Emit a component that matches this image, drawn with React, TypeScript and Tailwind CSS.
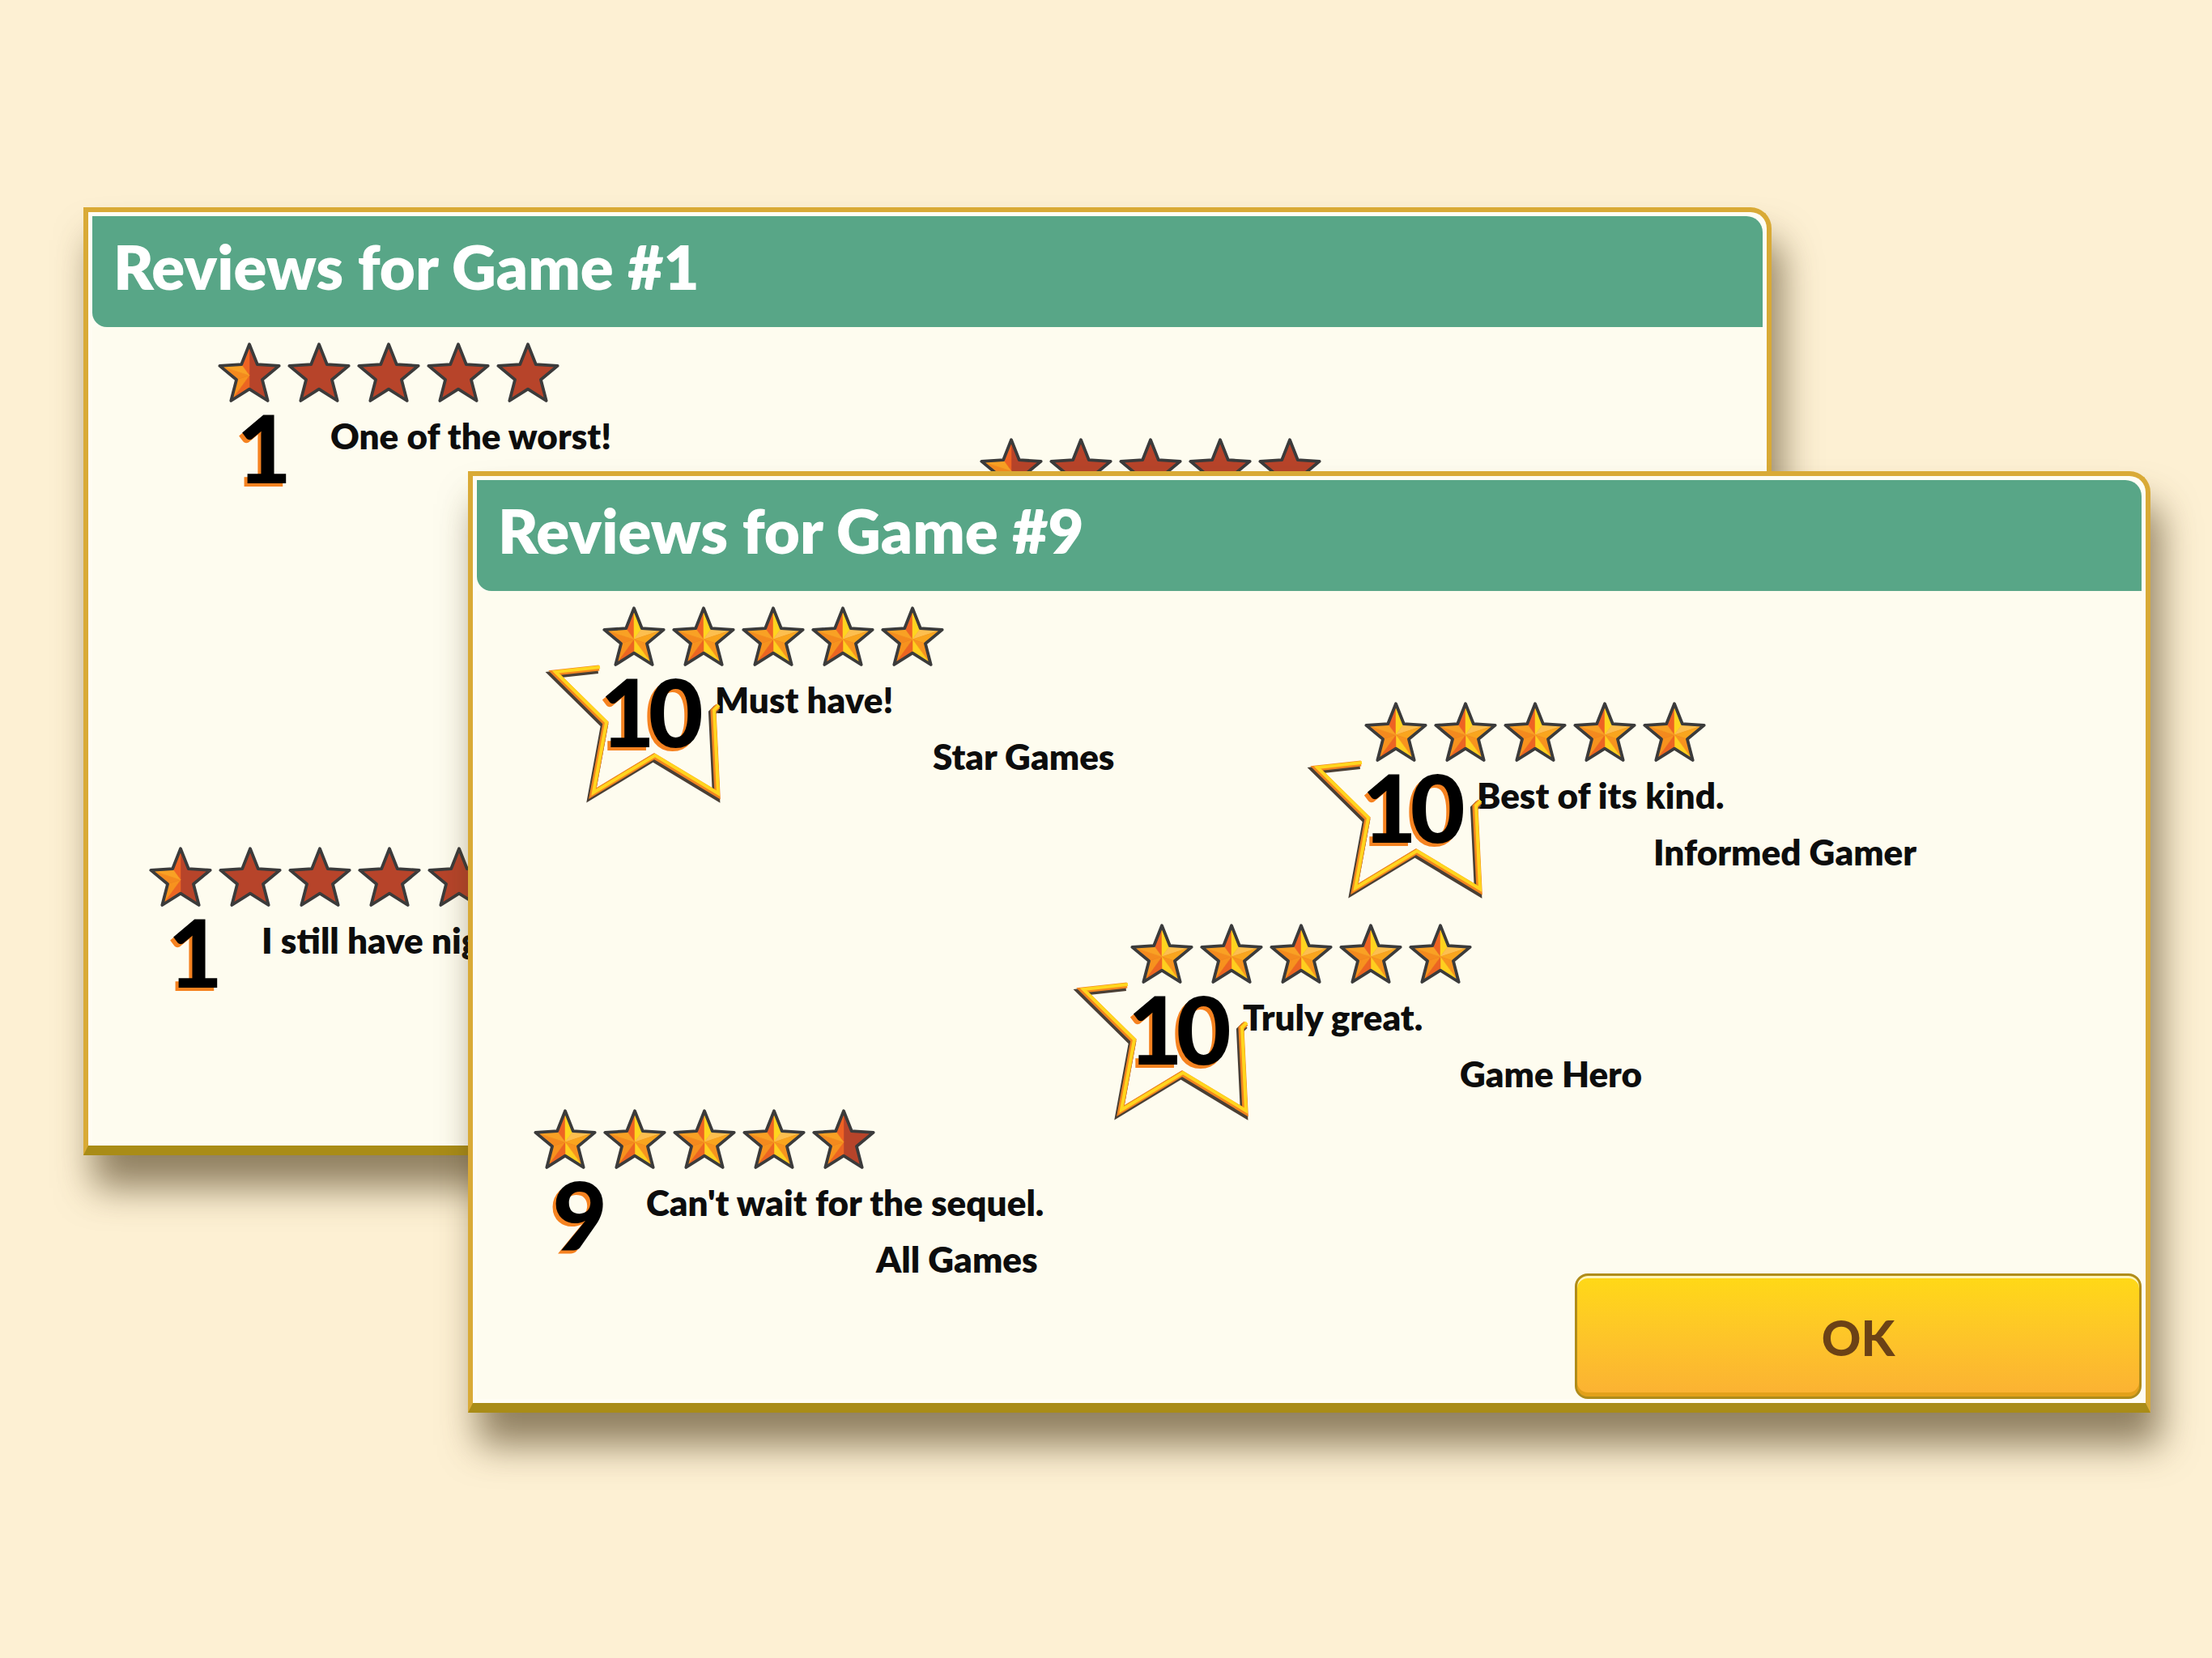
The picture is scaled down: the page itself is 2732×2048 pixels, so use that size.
import React from "react";

type Fill = "full" | "half" | "empty";

type Review = {
  score: number;
  text: string;
  by: string;
  indent: string;
  slot: string;
};

// star geometry in a 100 x 93 box
const R = 46;
const r = 20;
const pt = (deg: number, rad: number) => [
  50 + rad * Math.cos((deg * Math.PI) / 180),
  51 + rad * Math.sin((deg * Math.PI) / 180),
];
const tips = [0, 1, 2, 3, 4].map((k) => pt(-90 + 72 * k, R));
const inner = [0, 1, 2, 3, 4].map((k) => pt(-54 + 72 * k, r));
const outline = tips
  .flatMap((t, k) => [t, inner[k]])
  .map((p) => p.join(","))
  .join(" ");

// each arm is split in two facets: [towards previous notch, towards next notch]
const facetColors = [
  ["#ee6323", "#ffd41f"],
  ["#fdbf4f", "#f9a51e"],
  ["#f7931e", "#ffcf1f"],
  ["#ec6522", "#f7921e"],
  ["#f48a1e", "#f9a124"],
];

type Facet = { pts: string; color: string };

const facet = (k: number, side: 0 | 1): Facet => {
  const notch = side === 0 ? inner[(k + 4) % 5] : inner[k];
  return {
    pts: [[50, 51], tips[k], notch].map((p) => p.join(",")).join(" "),
    color: facetColors[k][side],
  };
};

const allFacets = [0, 1, 2, 3, 4].flatMap((k) => [facet(k, 0), facet(k, 1)]);
const leftFacets = [facet(0, 0), facet(3, 0), facet(3, 1), facet(4, 0), facet(4, 1)];

function Star({ fill }: { fill: Fill }) {
  const facets = fill === "full" ? allFacets : fill === "half" ? leftFacets : [];
  return (
    <svg width="84" height="78" viewBox="0 0 100 93" className="shrink-0">
      <polygon points={outline} fill="#b7442a" />
      {facets.map((f, i) => (
        <polygon key={i} points={f.pts} fill={f.color} stroke={f.color} strokeWidth="0.6" />
      ))}
      <polygon
        points={outline}
        fill="none"
        stroke="#3b3b3b"
        strokeWidth="4.5"
        strokeLinejoin="round"
      />
    </svg>
  );
}

function starsFor(score: number): Fill[] {
  return [0, 1, 2, 3, 4].map((i) => {
    const v = score - i * 2;
    if (v >= 2) return "full";
    if (v === 1) return "half";
    return "empty";
  });
}

// open star outline drawn behind a perfect score
function Badge() {
  const pts = "55,0 0,6 63,68 47,155 123,109 201,156 196,53 202,47";
  return (
    <svg
      width="201"
      height="158"
      viewBox="0 0 201 158"
      overflow="visible"
      className="absolute left-[-56px] top-[78px]"
    >
      <polyline
        points={pts}
        fill="none"
        stroke="#4a3f35"
        strokeWidth="9"
        strokeMiterlimit="10"
        transform="translate(-1.5 2.5)"
      />
      <polyline points={pts} fill="none" stroke="#f3861f" strokeWidth="7" strokeMiterlimit="10" />
      <polyline
        points={pts}
        fill="none"
        stroke="#ffd61f"
        strokeWidth="4"
        strokeMiterlimit="10"
        transform="translate(1 -1)"
      />
    </svg>
  );
}

function ReviewItem({ review }: { review: Review }) {
  return (
    <div className={`absolute ${review.slot}`}>
      {review.score === 10 && <Badge />}
      <div className="flex gap-[2px]">
        {starsFor(review.score).map((f, i) => (
          <Star key={i} fill={f} />
        ))}
      </div>
      {review.text && (
        <div className="mt-[4px] flex gap-[20px]">
          <div className="relative mt-[9px] w-[122px] pr-[10px] text-center text-[117px] leading-[80px] font-black tracking-[-0.07em] text-black [text-shadow:-4px_4px_0_#f58220]">
            {review.score}
          </div>
          <div className="text-[44px] leading-[70px] font-extrabold whitespace-nowrap text-[#0d0d0d]">
            <p>{review.text}</p>
            {review.by && <p className={review.indent}>{review.by}</p>}
          </div>
        </div>
      )}
    </div>
  );
}

function Panel({
  title,
  reviews,
  className,
  children,
}: {
  title: string;
  reviews: Review[];
  className: string;
  children?: React.ReactNode;
}) {
  return (
    <section
      className={`absolute flex flex-col rounded-tr-[26px] border-[6px] border-b-[12px] border-[#d9aa36] border-b-[#a98c17] bg-[#fffdf3] p-[5px] shadow-[12px_40px_46px_rgba(78,60,28,0.62)] ${className}`}
    >
      <header className="h-[137px] shrink-0 rounded-tr-[20px] rounded-bl-[18px] bg-[#58a687] pt-[24px] pl-[26px]">
        <h1 className="text-[76px] leading-none font-extrabold text-white">{title}</h1>
      </header>
      <div className="relative flex flex-1 items-end justify-end bg-[#fefcef]">
        {reviews.map((rv, i) => (
          <ReviewItem key={i} review={rv} />
        ))}
        {children}
      </div>
    </section>
  );
}

// the first window sits behind, so only what peeks out is filled in
const gameOne: Review[] = [
  { score: 1, text: "One of the worst!", by: "", indent: "ml-[262px]", slot: "left-[152px] top-[17px]" },
  { score: 1, text: "", by: "", indent: "ml-[218px]", slot: "left-[1093px] top-[135px]" },
  { score: 1, text: "I still have nightmares.", by: "", indent: "ml-[284px]", slot: "left-[67px] top-[640px]" },
];

const gameNine: Review[] = [
  { score: 10, text: "Must have!", by: "Star Games", indent: "ml-[269px]", slot: "left-[152px] top-[17px]" },
  { score: 10, text: "Best of its kind.", by: "Informed Gamer", indent: "ml-[218px]", slot: "left-[1093px] top-[135px]" },
  { score: 10, text: "Truly great.", by: "Game Hero", indent: "ml-[268px]", slot: "left-[804px] top-[409px]" },
  { score: 9, text: "Can't wait for the sequel.", by: "All Games", indent: "ml-[284px]", slot: "left-[67px] top-[638px]" },
];

export default function App() {
  return (
    <div className="relative h-[2048px] w-[2732px] overflow-hidden bg-[#fdf0d3] font-[Lato,sans-serif]">
      <Panel
        title="Reviews for Game #1"
        reviews={gameOne}
        className="top-[256px] left-[103px] h-[1171px] w-[2085px]"
      />
      <Panel
        title="Reviews for Game #9"
        reviews={gameNine}
        className="top-[582px] left-[578px] h-[1163px] w-[2078px]"
      >
        <button className="flex h-[155px] w-[700px] items-center justify-center rounded-[16px] border-[3px] border-[#b08c1a] bg-linear-to-b from-[#ffd915] to-[#fbb133] pt-[2px] text-[60px] font-black text-[#6b4216] shadow-[inset_0_3px_0_rgba(255,255,255,0.7),inset_0_-5px_0_#e3a11a]">
          OK
        </button>
      </Panel>
    </div>
  );
}
